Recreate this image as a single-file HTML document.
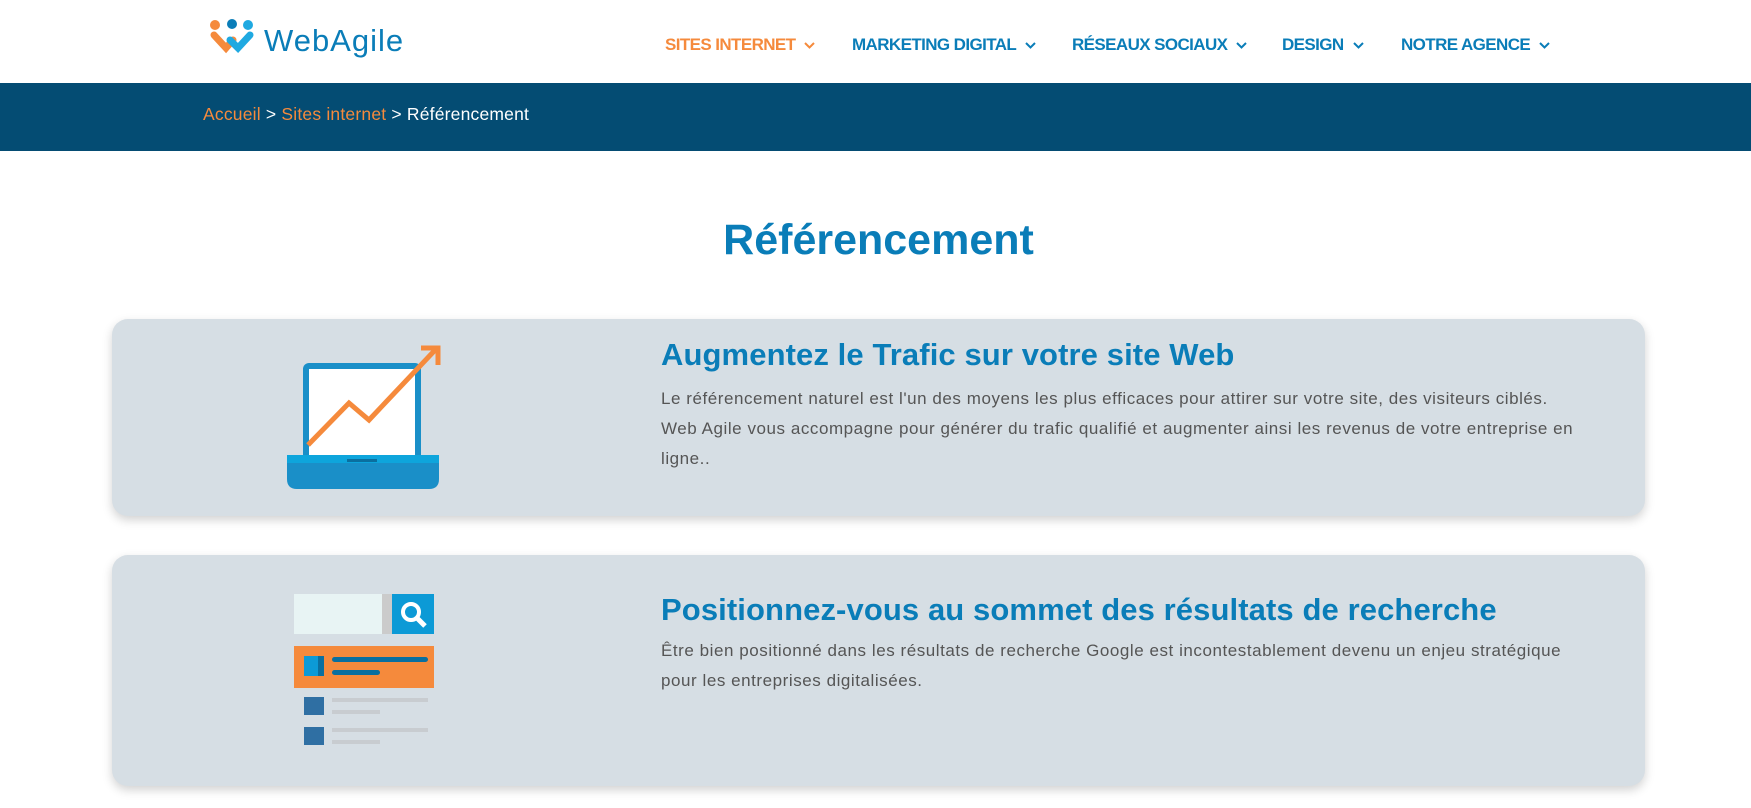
<!DOCTYPE html>
<html><head><meta charset="utf-8"><style>
*{margin:0;padding:0;box-sizing:border-box}
body{width:1751px;height:808px;overflow:hidden;background:#fff;font-family:"Liberation Sans",sans-serif;position:relative}
.abs{position:absolute}
.nav{top:35px;font-size:17px;font-weight:bold;color:#0a7db8;letter-spacing:-0.6px;white-space:nowrap}
.nav svg{margin-left:9px;vertical-align:middle}
.bar{left:0;top:83px;width:1751px;height:68px;background:#044c73}
.card{left:112px;width:1533px;border-radius:16px;background:#d6dee4;box-shadow:0 4px 10px rgba(0,0,0,.18);overflow:hidden}
.h{font-size:31px;font-weight:bold;color:#0a7db8;white-space:nowrap;letter-spacing:0.1px}
.p{font-size:17px;color:#555;line-height:30px;letter-spacing:0.55px;white-space:nowrap}
</style></head><body>
<svg class="abs" style="left:208px;top:18px" width="200" height="42" viewBox="0 0 200 42">
<circle cx="7" cy="7" r="5" fill="#f58a3c"/><circle cx="24" cy="6" r="5" fill="#0a7db8"/><circle cx="40" cy="7" r="5" fill="#1fa9e1"/>
<path d="M6 17 L18 30 L25 22" stroke="#f58a3c" stroke-width="7" fill="none" stroke-linecap="round"/>
<path d="M22 22 L30 30 L42 17" stroke="#1fa9e1" stroke-width="7" fill="none" stroke-linecap="round"/>
<text x="56" y="33" font-family="Liberation Sans" font-size="31" fill="#0a7db8" letter-spacing="1">WebAgile</text>
</svg>
<div class="abs nav" style="left:665px;color:#f58a3c">SITES INTERNET<svg width="11" height="8"><path d="M1 1l4.5 4.5L10 1" stroke="#f58a3c" stroke-width="2" fill="none"/></svg></div>
<div class="abs nav" style="left:852px">MARKETING DIGITAL<svg width="11" height="8"><path d="M1 1l4.5 4.5L10 1" stroke="#0a7db8" stroke-width="2" fill="none"/></svg></div>
<div class="abs nav" style="left:1072px">RÉSEAUX SOCIAUX<svg width="11" height="8"><path d="M1 1l4.5 4.5L10 1" stroke="#0a7db8" stroke-width="2" fill="none"/></svg></div>
<div class="abs nav" style="left:1282px">DESIGN<svg width="11" height="8"><path d="M1 1l4.5 4.5L10 1" stroke="#0a7db8" stroke-width="2" fill="none"/></svg></div>
<div class="abs nav" style="left:1401px">NOTRE AGENCE<svg width="11" height="8"><path d="M1 1l4.5 4.5L10 1" stroke="#0a7db8" stroke-width="2" fill="none"/></svg></div>
<div class="abs bar"></div>
<div class="abs" style="left:203px;top:104px;font-size:17.5px;color:#fff;letter-spacing:0.2px"><span style="color:#f58a3c">Accueil</span> &gt; <span style="color:#f58a3c">Sites internet</span> &gt; Référencement</div>
<div class="abs" style="left:0;width:1757px;text-align:center;top:216px;font-size:43px;font-weight:bold;color:#0a7db8">Référencement</div>

<div class="abs card" style="top:319px;height:197px"></div>
<svg class="abs" style="left:285px;top:343px" width="158" height="148" viewBox="0 0 158 148">
<rect x="18" y="20" width="118" height="100" rx="6" fill="#1a8fc8"/>
<rect x="24" y="26" width="106" height="90" fill="#fff"/>
<path d="M2 112 H154 V136 Q154 146 144 146 H12 Q2 146 2 136Z" fill="#1a8fc8"/>
<rect x="2" y="112" width="152" height="8" fill="#0ea5dc"/>
<rect x="62" y="116" width="30" height="3" fill="#0a6f9f"/>
<path d="M23 102 L64 60 L84 77 L152 5" stroke="#f58a3c" stroke-width="5" fill="none"/>
<path d="M136 5 H153 V22" stroke="#f58a3c" stroke-width="5" fill="none"/>
</svg>
<div class="abs h" style="left:661px;top:337px">Augmentez le Trafic sur votre site Web</div>
<div class="abs p" style="left:661px;top:384px">Le référencement naturel est l'un des moyens les plus efficaces pour attirer sur votre site, des visiteurs ciblés.<br>Web Agile vous accompagne pour générer du trafic qualifié et augmenter ainsi les revenus de votre entreprise en<br>ligne..</div>

<div class="abs card" style="top:555px;height:231px"></div>
<svg class="abs" style="left:294px;top:594px" width="140" height="154" viewBox="0 0 140 154">
<rect x="0" y="0" width="88" height="40" fill="#e8f4f4"/>
<rect x="88" y="0" width="10" height="40" fill="#cbcbcb"/>
<rect x="98" y="0" width="42" height="40" fill="#0c9ad6"/>
<circle cx="117" cy="18" r="8" stroke="#fff" stroke-width="4" fill="none"/>
<path d="M123 24 L131 32" stroke="#fff" stroke-width="5"/>
<rect x="0" y="52" width="140" height="42" fill="#f58a3c"/>
<rect x="10" y="62" width="20" height="20" fill="#0c9ad6"/><rect x="24" y="62" width="6" height="20" fill="#0a6f9f"/>
<rect x="38" y="63" width="96" height="5" rx="2.5" fill="#0a6f9f"/><rect x="38" y="76" width="48" height="5" rx="2.5" fill="#0a6f9f"/>
<rect x="10" y="103" width="20" height="18" fill="#2f6fa3"/><rect x="38" y="104" width="96" height="4" fill="#c8ccd0"/><rect x="38" y="116" width="48" height="4" fill="#c8ccd0"/>
<rect x="10" y="133" width="20" height="18" fill="#2f6fa3"/><rect x="38" y="134" width="96" height="4" fill="#c8ccd0"/><rect x="38" y="146" width="48" height="4" fill="#c8ccd0"/>
</svg>
<div class="abs h" style="left:661px;top:592px">Positionnez-vous au sommet des résultats de recherche</div>
<div class="abs p" style="left:661px;top:636px">Être bien positionné dans les résultats de recherche Google est incontestablement devenu un enjeu stratégique<br>pour les entreprises digitalisées.</div>
</body></html>
